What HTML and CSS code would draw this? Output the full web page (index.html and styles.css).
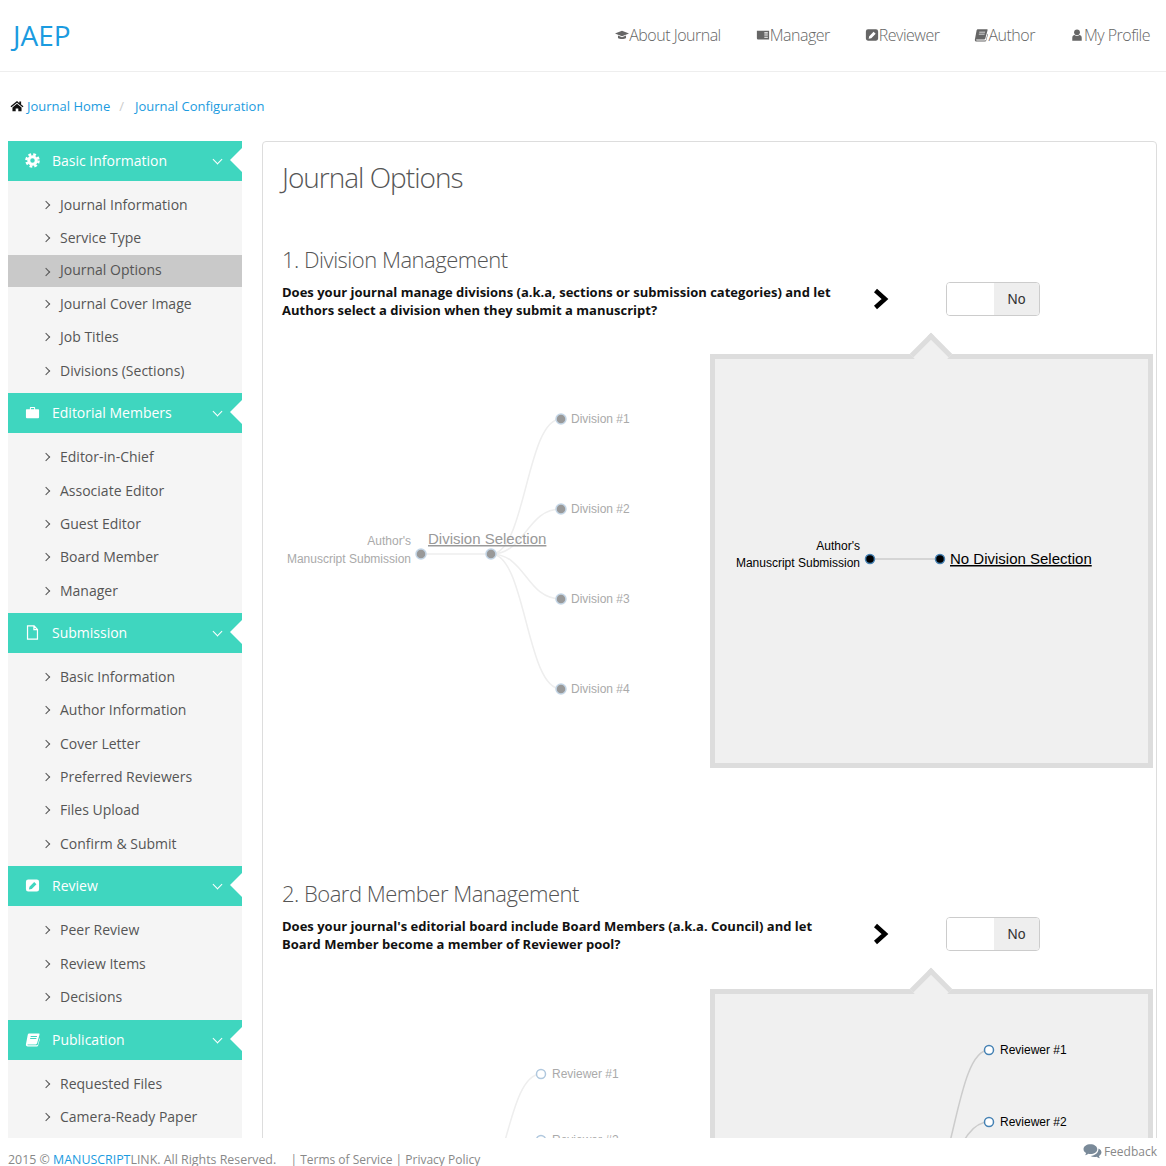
FILE: index.html
```html
<!DOCTYPE html>
<html lang="en">
<head>
    <meta charset="UTF-8">
    <meta name="viewport" content="width=device-width, initial-scale=1.0">
    <title>Journal Options</title>
    <link rel="stylesheet" href="styles.css">
</head>
<body>

    <!-- icon sprite -->
    <svg class="sprite" xmlns="http://www.w3.org/2000/svg">
        <symbol id="i-home" viewBox="0 0 16 16"><path d="M8 2.2 0.6 8.4l1 1.1L8 4.2l6.4 5.3 1-1.1-2.7-2.2V2.8h-2.1v1.7Z"/><path d="M8 5.4 2.8 9.7V14h3.7v-3.2h3V14h3.7V9.7Z"/></symbol>
        <symbol id="i-cap" viewBox="0 0 16 16"><path d="M0 6.2 8 3l8 3.2-8 3.2Z"/><path d="M3.4 8.6v2.7c2 1.7 7.200 1.700 9.200 0V8.600L8 10.500Z"/></symbol>
        <symbol id="i-news" viewBox="0 0 16 16"><path fill-rule="evenodd" d="M1 3h14v10.200H2.400A1.400 1.400 0 0 1 1 11.800ZM9.500 4.800v1.400h4V4.800ZM9.500 7.500v1.100h4V7.500ZM9.500 10v1.100h4V10Z"/></symbol>
        <symbol id="i-edit" viewBox="0 0 16 16"><path fill-rule="evenodd" d="M3.400 1.500h9.200A2.400 2.400 0 0 1 15 3.900v8.200a2.400 2.400 0 0 1-2.400 2.400H3.400A2.400 2.400 0 0 1 1 12.100V3.900A2.400 2.400 0 0 1 3.400 1.500ZM4.200 12.300l3-.6 5-5-2.400-2.400-5 5Z"/></symbol>
        <symbol id="i-book" viewBox="0 0 16 16"><path fill-rule="evenodd" d="M4.600 1.500h10.200c.6 0 .9.500.7 1.100l-2.600 9.400c-.2.800-.7 1.200-1.400 1.200H3.200c-.5 0-.8.200-.8.500 0 .3.300.5.800.5h9.600l.7-.3 2-7.200.500.500-2.100 7.500c-.2.500-.6.800-1.100.8H3c-1.400 0-2.300-1-2-2.400l2-10.400c.2-.7.800-1.200 1.600-1.200ZM6 4.200v1h6.600l.3-1ZM5.500 6.500v1h6.500l.3-1Z"/></symbol>
        <symbol id="i-user" viewBox="0 0 16 16"><circle cx="8" cy="4.900" r="3.300"/><path d="M2.600 14.500V11c0-1.900 1.300-3 2.700-3 .8.700 1.700 1.100 2.700 1.100s1.900-.4 2.700-1.100c1.400 0 2.700 1.100 2.700 3v3.500Z"/></symbol>
        <symbol id="i-gear" viewBox="0 0 16 16"><circle cx="8" cy="8" r="6.500" fill="none" stroke="currentColor" stroke-width="2.600" stroke-dasharray="2.900 2.200"/><circle cx="8" cy="8" r="4" fill="none" stroke="currentColor" stroke-width="3.200"/></symbol>
        <symbol id="i-case" viewBox="0 0 16 16"><path fill-rule="evenodd" d="M2 4.400h3.200V3c0-.6.500-1 1-1h3.600c.5 0 1 .4 1 1v1.400H14c.6 0 1 .5 1 1v7.600c0 .6-.4 1-1 1H2c-.6 0-1-.4-1-1V5.400c0-.5.400-1 1-1ZM6.300 4.400h3.400V3.200H6.300Z"/></symbol>
        <symbol id="i-file" viewBox="0 0 16 16"><path fill="none" stroke="currentColor" stroke-width="1.300" d="M2.700 1h7l3.600 3.800V15H2.700ZM9.500 1v4h3.800"/></symbol>
        <symbol id="i-chat" viewBox="0 0 18 16"><path d="M7 1.200c3.600 0 6.500 2 6.500 4.600S10.600 10.400 7 10.400c-.7 0-1.300-.1-1.900-.2-.9.7-2 1.200-3.200 1.400.5-.7.900-1.400 1-2.200C1.500 8.600.5 7.300.5 5.800.5 3.200 3.400 1.200 7 1.200Z"/><path d="M14.700 5.200c1.700.8 2.800 2.100 2.800 3.600 0 1.400-.9 2.600-2.400 3.400.1.800.5 1.500 1 2.200-1.200-.2-2.300-.7-3.200-1.400-.6.100-1.200.2-1.900.2-1.500 0-2.800-.4-3.900-1 4.300-.1 7.700-3 7.600-7Z"/></symbol>
    </svg>

    <header class="topbar">
        <a class="logo" href="#">JAEP</a>
        <nav class="topnav">
            <a href="#"><svg class="nav-icon"><use href="#i-cap"/></svg>About Journal</a>
            <a href="#"><svg class="nav-icon"><use href="#i-news"/></svg>Manager</a>
            <a href="#"><svg class="nav-icon"><use href="#i-edit"/></svg>Reviewer</a>
            <a href="#"><svg class="nav-icon"><use href="#i-book"/></svg>Author</a>
            <a href="#"><svg class="nav-icon"><use href="#i-user"/></svg>My Profile</a>
        </nav>
    </header>

    <div class="breadcrumb">
        <svg class="crumb-icon"><use href="#i-home"/></svg>
        <a href="#">Journal Home</a>
        <span class="crumb-sep">/</span>
        <a href="#">Journal Configuration</a>
    </div>

    <div class="content">
        <aside class="sidebar">
            <h3 class="side-head"><svg class="side-icon"><use href="#i-gear"/></svg>Basic Information</h3>
            <ul class="side-list">
                <li>Journal Information</li>
                <li>Service Type</li>
                <li class="active">Journal Options</li>
                <li>Journal Cover Image</li>
                <li>Job Titles</li>
                <li>Divisions (Sections)</li>
            </ul>
            <h3 class="side-head"><svg class="side-icon"><use href="#i-case"/></svg>Editorial Members</h3>
            <ul class="side-list">
                <li>Editor-in-Chief</li>
                <li>Associate Editor</li>
                <li>Guest Editor</li>
                <li>Board Member</li>
                <li>Manager</li>
            </ul>
            <h3 class="side-head"><svg class="side-icon"><use href="#i-file"/></svg>Submission</h3>
            <ul class="side-list">
                <li>Basic Information</li>
                <li>Author Information</li>
                <li>Cover Letter</li>
                <li>Preferred Reviewers</li>
                <li>Files Upload</li>
                <li>Confirm &amp; Submit</li>
            </ul>
            <h3 class="side-head"><svg class="side-icon"><use href="#i-edit"/></svg>Review</h3>
            <ul class="side-list">
                <li>Peer Review</li>
                <li>Review Items</li>
                <li>Decisions</li>
            </ul>
            <h3 class="side-head"><svg class="side-icon"><use href="#i-book"/></svg>Publication</h3>
            <ul class="side-list">
                <li>Requested Files</li>
                <li>Camera-Ready Paper</li>
            </ul>
        </aside>

        <main class="panel">
            <h1>Journal Options</h1>

            <section class="option">
                <h2>1. Division Management</h2>
                <div class="option-row">
                    <p class="question">Does your journal manage divisions (a.k.a, sections or submission categories) and let Authors select a division when they submit a manuscript?</p>
                    <svg class="arrow" viewBox="0 0 16 22"><path d="M2.500 2.500 12 11l-9.500 8.500"/></svg>
                    <div class="toggle"><span class="toggle-off"></span><span class="toggle-label">No</span></div>
                </div>
                <div class="diagram-row">
                    <svg class="tree tree-left" viewBox="282 333 428 435">
                        <path d="M421 554H491"/>
                        <path d="M491 554C526 554 526 419 561 419"/>
                        <path d="M491 554C526 554 526 509 561 509"/>
                        <path d="M491 554C526 554 526 599 561 599"/>
                        <path d="M491 554C526 554 526 689 561 689"/>
                        <circle cx="421" cy="554" r="5"/>
                        <circle cx="491" cy="554" r="5"/>
                        <circle cx="561" cy="419" r="5"/>
                        <circle cx="561" cy="509" r="5"/>
                        <circle cx="561" cy="599" r="5"/>
                        <circle cx="561" cy="689" r="5"/>
                        <text x="411" y="545" text-anchor="end">Author's</text>
                        <text x="411" y="563" text-anchor="end">Manuscript Submission</text>
                        <text class="tree-title" x="428" y="544">Division Selection</text>
                        <text x="571" y="423">Division #1</text>
                        <text x="571" y="513">Division #2</text>
                        <text x="571" y="603">Division #3</text>
                        <text x="571" y="693">Division #4</text>
                    </svg>
                    <div class="callout">
                        <svg class="tree tree-dark" viewBox="715 359 433 404">
                            <path d="M870 559H940"/>
                            <circle cx="870" cy="559" r="4.500"/>
                            <circle cx="940" cy="559" r="4.500"/>
                            <text x="860" y="550" text-anchor="end">Author's</text>
                            <text x="860" y="567" text-anchor="end">Manuscript Submission</text>
                            <text class="tree-title" x="950" y="564">No Division Selection</text>
                        </svg>
                    </div>
                </div>
            </section>

            <section class="option">
                <h2>2. Board Member Management</h2>
                <div class="option-row">
                    <p class="question">Does your journal's editorial board include Board Members (a.k.a. Council) and let Board Member become a member of Reviewer pool?</p>
                    <svg class="arrow" viewBox="0 0 16 22"><path d="M2.500 2.500 12 11l-9.500 8.500"/></svg>
                    <div class="toggle"><span class="toggle-off"></span><span class="toggle-label">No</span></div>
                </div>
                <div class="diagram-row">
                    <svg class="tree tree-left tree-open" viewBox="282 968 428 435">
                        <path d="M471 1200C506 1200 506 1074 541 1074"/>
                        <path d="M471 1200C506 1200 506 1140 541 1140"/>
                        <circle cx="541" cy="1074" r="4.500"/>
                        <circle cx="541" cy="1140" r="4.500"/>
                        <text x="552" y="1078">Reviewer #1</text>
                        <text x="552" y="1144">Reviewer #2</text>
                    </svg>
                    <div class="callout">
                        <svg class="tree tree-dark tree-open" viewBox="715 994 433 404">
                            <path d="M919 1200C954 1200 954 1050 989 1050"/>
                            <path d="M919 1200C954 1200 954 1122 989 1122"/>
                            <circle cx="989" cy="1050" r="4.500"/>
                            <circle cx="989" cy="1122" r="4.500"/>
                            <text x="1000" y="1054">Reviewer #1</text>
                            <text x="1000" y="1126">Reviewer #2</text>
                        </svg>
                    </div>
                </div>
            </section>
        </main>
    </div>

    <footer class="footer">
        <p class="copyright">2015 &copy; <a href="#">MANUSCRIPT</a>LINK. All Rights Reserved. <span class="terms">| Terms of Service | Privacy Policy</span></p>
        <a class="feedback" href="#"><svg class="chat-icon"><use href="#i-chat"/></svg>Feedback</a>
    </footer>

</body>
</html>
```

FILE: styles.css
```css
html, body {
    margin: 0;
    padding: 0;
    height: 1166px;
    overflow: hidden;
    background-color: #fff;
    font-family: "Open Sans", sans-serif;
    font-size: 14px;
    color: #555;
}
a {
    text-decoration: none;
}
.sprite {
    display: none;
}

/* top bar */
.topbar {
    display: flex;
    align-items: center;
    justify-content: space-between;
    height: 70px;
    padding-bottom: 1px;
    border-bottom: 1px solid #eee;
}
.logo {
    margin-left: 13px;
    font-size: 28px;
    color: #1b9be0;
}
.topnav {
    display: flex;
    gap: 35px;
    margin-right: 16px;
}
.topnav a {
    display: flex;
    align-items: center;
    font-size: 16px;
    font-weight: 300;
    letter-spacing: -0.5px;
    color: #666;
}
.nav-icon {
    width: 14px;
    height: 14px;
    fill: #666;
}

/* breadcrumb */
.breadcrumb {
    display: flex;
    align-items: center;
    height: 68px;
    padding-left: 10px;
    margin-bottom: 1px;
    font-size: 13px;
}
.breadcrumb a {
    color: #1b9be0;
}
.crumb-icon {
    width: 14px;
    height: 14px;
    margin-right: 3px;
    fill: #111;
}
.crumb-sep {
    margin: 0 11px 0 9px;
    color: #ccc;
}

/* main area */
.content {
    display: flex;
    gap: 20px;
    height: 997px;
    margin-left: 8px;
    overflow: hidden;
}

/* sidebar */
.sidebar {
    flex: 0 0 234px;
    background-color: #f5f5f5;
}
.side-head {
    position: relative;
    display: flex;
    align-items: center;
    height: 40px;
    margin: 0;
    padding: 0 0 1px 17px;
    box-sizing: border-box;
    background-color: #3fd6bf;
    font-size: 14px;
    font-weight: 400;
    color: #fff;
}
.side-head::before {
    content: "";
    position: absolute;
    right: 21px;
    top: 15px;
    width: 6px;
    height: 6px;
    border-right: 1.500px solid #fff;
    border-bottom: 1.500px solid #fff;
    transform: rotate(45deg);
}
.side-head::after {
    content: "";
    position: absolute;
    right: 0;
    top: 7px;
    border-top: 12px solid transparent;
    border-bottom: 12px solid transparent;
    border-right: 12px solid #fff;
}
.side-icon {
    width: 15px;
    height: 15px;
    margin-right: 12px;
    fill: #fff;
    color: #fff;
}
.side-list {
    list-style: none;
    margin: 0;
    padding: 7px 0 6.350px;
}
.side-list li {
    position: relative;
    height: 33.300px;
    padding-left: 52px;
    line-height: 33px;
    box-sizing: border-box;
    color: #555;
}
.side-list li::before {
    content: "";
    position: absolute;
    left: 35px;
    top: 14px;
    width: 5px;
    height: 5px;
    border-top: 1.500px solid #555;
    border-right: 1.500px solid #555;
    transform: rotate(45deg);
}
.side-list li.active {
    height: 32.500px;
    line-height: 30px;
    background-color: #c9c9c9;
}

/* panel */
.panel {
    flex: 0 0 auto;
    width: 874px;
    height: 1100px;
    padding-left: 19px;
    border: 1px solid #ddd;
    border-radius: 4px;
}
.panel h1 {
    height: 40px;
    margin: 0;
    padding-top: 15px;
    font-size: 28px;
    font-weight: 300;
    line-height: 40px;
    letter-spacing: -1px;
    color: #555;
}
.option {
    height: 634px;
}
.option:first-of-type {
    margin-top: 47px;
}
.option h2 {
    height: 30px;
    margin: 0 0 8px;
    font-size: 22px;
    font-weight: 300;
    line-height: 30px;
    letter-spacing: -0.5px;
    color: #555;
}
.option + .option h2 {
    margin-bottom: 9px;
}
.option-row {
    display: flex;
    align-items: flex-start;
    height: 37px;
}
.question {
    width: 558px;
    margin: 1px 33px 0 0;
    font-size: 13px;
    font-weight: 700;
    line-height: 18px;
    color: #111;
}
.option + .option .question {
    margin-top: 0;
}
.arrow {
    width: 16px;
    height: 22px;
    margin: 6px 57px 0 0;
}
.arrow path {
    fill: none;
    stroke: #000;
    stroke-width: 4.500px;
}
.toggle {
    display: flex;
    width: 92px;
    height: 32px;
    border: 1px solid #ccc;
    border-radius: 4px;
    overflow: hidden;
}
.toggle-off {
    flex: 0 0 47px;
    background-color: #fff;
}
.toggle-label {
    flex: 1;
    background-color: #eee;
    font-family: "Liberation Sans", sans-serif;
    font-size: 14px;
    line-height: 32px;
    text-align: center;
    color: #333;
}

/* diagrams */
.diagram-row {
    display: flex;
    margin-top: 14px;
}
.tree-left {
    flex: 0 0 428px;
    width: 428px;
    height: 435px;
}
.tree {
    font-family: "Liberation Sans", sans-serif;
    font-size: 12px;
}
.tree path {
    fill: none;
    stroke: #eee;
    stroke-width: 1.500px;
}
.tree circle {
    fill: #999;
    stroke: #c3d5e6;
    stroke-width: 1.500px;
}
.tree text {
    fill: #aaa;
}
.tree .tree-title {
    font-size: 15px;
    text-decoration: underline;
    fill: #999;
}
.tree-open circle {
    fill: #fff;
    stroke: #b0c8de;
}
.tree-dark path {
    stroke: #ccc;
}
.tree-dark circle {
    fill: #000;
    stroke: #4682b4;
}
.tree-dark text {
    fill: #000;
}
.tree-dark .tree-title {
    fill: #000;
}
.tree-dark.tree-open circle {
    fill: #fff;
    stroke: #4682b4;
}
.callout {
    position: relative;
    width: 433px;
    height: 404px;
    margin-top: 21px;
    border: 5px solid #ddd;
    background-color: #f0f0f0;
}
.callout::before {
    content: "";
    position: absolute;
    left: 201px;
    top: -20px;
    width: 30px;
    height: 30px;
    box-sizing: border-box;
    border-top: 5px solid #ddd;
    border-left: 5px solid #ddd;
    background-color: #f0f0f0;
    transform: rotate(45deg);
}
.callout .tree {
    position: relative;
    display: block;
    width: 433px;
    height: 404px;
}

/* footer */
.footer {
    display: flex;
    justify-content: space-between;
    height: 28px;
    padding: 0 9px 0 8px;
    background-color: #fff;
    font-size: 12px;
    color: #888;
}
.copyright {
    margin: 16px 0 0;
    font-size: 12.400px;
    line-height: 12px;
    white-space: nowrap;
}
.copyright a {
    color: #1b9be0;
}
.terms {
    margin-left: 11px;
    font-size: 12px;
}
.feedback {
    display: flex;
    align-items: center;
    height: 26px;
    color: #888;
}
.chat-icon {
    width: 19px;
    height: 17px;
    margin-right: 2px;
    fill: #7a8a99;
}
```
